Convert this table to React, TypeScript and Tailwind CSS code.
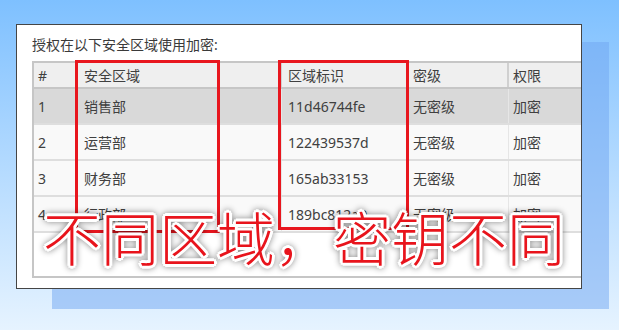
const columns = [
  { label: "#", width: "w-[44px]" },
  { label: "安全区域", width: "w-[204px]" },
  { label: "区域标识", width: "w-[127px]" },
  { label: "密级", width: "w-[100px]" },
  { label: "权限", width: "w-[110px]" },
];

const rows = [
  ["1", "销售部", "11d46744fe", "无密级", "加密"],
  ["2", "运营部", "122439537d", "无密级", "加密"],
  ["3", "财务部", "165ab33153", "无密级", "加密"],
  ["4", "行政部", "189bc812a9", "无密级", "加密"],
];

export default function App() {
  return (
    <div className="relative h-[330px] w-[619px] overflow-hidden bg-gradient-to-b from-[#7ec0ff] to-[#e6f3ff] pl-4 pt-6 font-['Noto_Sans','Noto_Sans_CJK_SC',sans-serif]">
      <div className="relative h-[265px] w-[566px]">
        {/* offset backdrop behind the window */}
        <div className="absolute left-[36px] top-[18px] h-[267px] w-[557px] bg-[#70a6f1]/50" />

        <div className="relative flex h-full w-full flex-col overflow-hidden border border-[#454545] bg-white pl-[15px]">
          <p className="mt-[9px] h-[22px] text-[14px] leading-[22px] text-[#3a3a3a]">授权在以下安全区域使用加密:</p>

          <div className="mt-[5px] flex h-[217px] w-[600px] flex-col border-2 border-r-0 border-[#c6c6c6] text-[14px] text-[#404040]">
            <div className="flex h-[26px] border-b-2 border-[#c6c6c6] bg-[#efefef]">
              {columns.map((c, i) => (
                <div key={i} className={`${c.width} flex items-center border-r-2 border-[#d0d0d0] pl-[4px] ${i === 1 || i === 2 ? "pl-[6px]" : ""}`}>
                  {c.label}
                </div>
              ))}
            </div>
            {rows.map((r, ri) => (
              <div key={ri} className={`flex h-[36px] border-b-2 border-[#dedede] ${ri === 0 ? "bg-[#d9d9d9]" : "bg-[#f9f9f9]"}`}>
                {r.map((cell, ci) => (
                  <div key={ci} className={`${columns[ci].width} flex items-center border-r border-[#e6e6e6] pl-[4px] ${ci === 1 || ci === 2 ? "pl-[6px]" : ""}`}>
                    {cell}
                  </div>
                ))}
              </div>
            ))}
            <div className="flex-1 bg-white" />
          </div>

          {/* red highlight frames */}
          <div className="absolute left-[58px] top-[35px] h-[173px] w-[145px] border-[3px] border-[#e8161e]" />
          <div className="absolute left-[261px] top-[35px] h-[170px] w-[131px] border-[3px] border-[#e8161e]" />
        </div>
      </div>

      <div className="absolute left-[43px] top-[207px] whitespace-nowrap text-[58px] font-light leading-none text-[#e8141c] [filter:drop-shadow(0_0_3px_rgba(0,0,0,0.45))] [text-shadow:-2px_-2px_0_#fff,2px_-2px_0_#fff,-2px_2px_0_#fff,2px_2px_0_#fff,0_3px_0_#fff,0_-3px_0_#fff,3px_0_0_#fff,-3px_0_0_#fff] font-['Noto_Sans_CJK_SC',sans-serif]">
        不同区域，密钥不同
      </div>
    </div>
  );
}
